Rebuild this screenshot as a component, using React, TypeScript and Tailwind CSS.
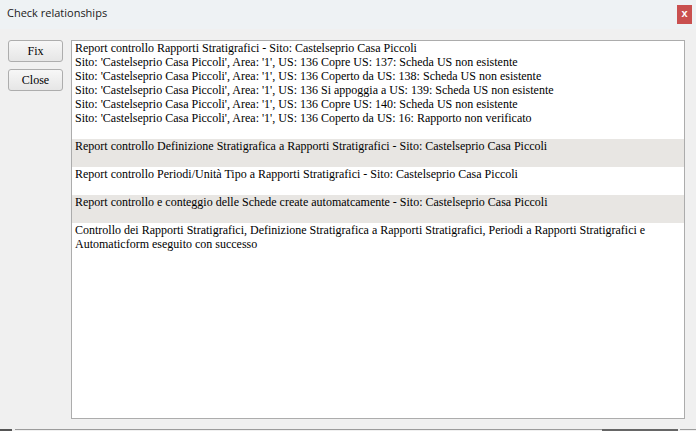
import { Fragment } from "react";

const site = "Castelseprio Casa Piccoli";

interface Block {
  lines: string[];
  shaded: boolean;
}

const blocks: Block[] = [
  {
    shaded: false,
    lines: [
      `Report controllo Rapporti Stratigrafici - Sito: ${site}`,
      `Sito: '${site}', Area: '1', US: 136 Copre US: 137: Scheda US non esistente`,
      `Sito: '${site}', Area: '1', US: 136 Coperto da US: 138: Scheda US non esistente`,
      `Sito: '${site}', Area: '1', US: 136 Si appoggia a US: 139: Scheda US non esistente`,
      `Sito: '${site}', Area: '1', US: 136 Copre US: 140: Scheda US non esistente`,
      `Sito: '${site}', Area: '1', US: 136 Coperto da US: 16: Rapporto non verificato`,
    ],
  },
  {
    shaded: true,
    lines: [`Report controllo Definizione Stratigrafica a Rapporti Stratigrafici - Sito: ${site}`],
  },
  {
    shaded: false,
    lines: [`Report controllo Periodi/Unità Tipo a Rapporti Stratigrafici - Sito: ${site}`],
  },
  {
    shaded: true,
    lines: [`Report controllo e conteggio delle Schede create automatcamente - Sito: ${site}`],
  },
  {
    shaded: false,
    lines: [
      "Controllo dei Rapporti Stratigrafici, Definizione Stratigrafica a Rapporti Stratigrafici, Periodi a Rapporti Stratigrafici e",
      "Automaticform eseguito con successo",
    ],
  },
];

function DialogButton({ label }: { label: string }) {
  return (
    <button className="h-[22px] w-[55px] rounded-[3px] border border-[#adadad] bg-gradient-to-b from-[#f7f7f7] to-[#e6e6e6] text-[12px] leading-none text-black [font-family:'Liberation_Serif',serif]">
      {label}
    </button>
  );
}

export default function App() {
  return (
    <div className="flex h-[431px] w-[696px] flex-col overflow-hidden bg-[#f0f0f0] [font-family:'Liberation_Serif',serif]">
      <div className="flex h-[29px] shrink-0 items-center justify-between bg-[#eef2f4] pl-[7px] pr-[4px]">
        <span className="pb-[2px] text-[11px] text-[#1a1a1a] [font-family:'Open_Sans',sans-serif]">
          Check relationships
        </span>
        <div className="flex h-[19px] w-[15px] items-center justify-center bg-[#c9504f] pb-[2px] text-[11px] font-bold text-white [font-family:'Liberation_Sans',sans-serif]">
          x
        </div>
      </div>

      <div className="flex flex-1 gap-[8px] pl-[8px] pr-[11px] pt-[11px]">
        <div className="flex flex-col gap-[7px]">
          <DialogButton label="Fix" />
          <DialogButton label="Close" />
        </div>
        <div className="h-[379px] flex-1 border border-[#acacac] bg-white">
          {blocks.map((b, i) => (
            <div
              key={i}
              className={`pb-[14px] pl-[3px] text-[12px] leading-[14px] text-black ${b.shaded ? "bg-[#e8e6e3]" : "bg-white"}`}
            >
              {b.lines.map((l, j) => (
                <Fragment key={j}>
                  <div className="whitespace-nowrap">{l}</div>
                </Fragment>
              ))}
            </div>
          ))}
        </div>
      </div>

      {/* clipped status bar of the window underneath */}
      <div className="flex h-[3px] shrink-0 items-start">
        <div className="mt-[1px] h-[2px] w-[12px] bg-[#555]" />
        <div className="mt-[1px] ml-[3px] h-[1px] w-[587px] bg-[#9c9c9c]" />
        <div className="mt-[1px] h-[2px] w-[76px] bg-[#666]" />
        <div className="mt-[1px] ml-[2px] h-[1px] flex-1 bg-[#9c9c9c]" />
      </div>
    </div>
  );
}
